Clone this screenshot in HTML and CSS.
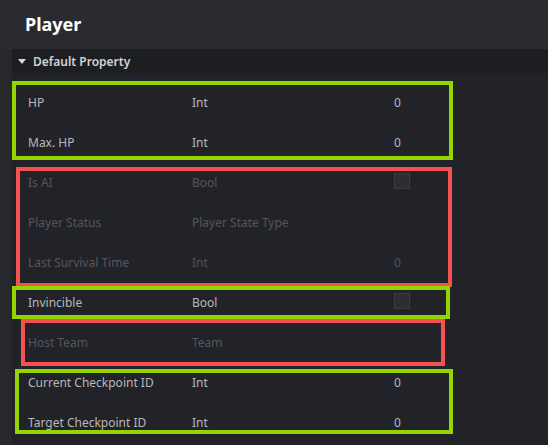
FILE: index.html
```html
<!DOCTYPE html>
<html>
<head>
<meta charset="utf-8">
<link rel="stylesheet" href="styles.css">
</head>
<body>
<div class="header"><h1 class="title">Player</h1></div>
<div class="panel">
  <div class="gutter"></div>
  <div class="section">
    <div class="section-head"><span class="caret"></span><span>Default Property</span></div>
    <div class="rows">
      <div class="row"><span class="name">HP</span><span class="type">Int</span><span class="val">0</span></div>
      <div class="row"><span class="name">Max. HP</span><span class="type">Int</span><span class="val">0</span></div>
      <div class="row off"><span class="name">Is AI</span><span class="type">Bool</span><span class="val"><span class="check"></span></span></div>
      <div class="row off"><span class="name">Player Status</span><span class="type">Player State Type</span><span class="val"></span></div>
      <div class="row off"><span class="name">Last Survival Time</span><span class="type">Int</span><span class="val">0</span></div>
      <div class="row"><span class="name">Invincible</span><span class="type">Bool</span><span class="val"><span class="check"></span></span></div>
      <div class="row off"><span class="name">Host Team</span><span class="type">Team</span><span class="val"></span></div>
      <div class="row"><span class="name">Current Checkpoint ID</span><span class="type">Int</span><span class="val">0</span></div>
      <div class="row"><span class="name">Target Checkpoint ID</span><span class="type">Int</span><span class="val">0</span></div>
    </div>
  </div>
</div>
<div class="mark green m1"></div>
<div class="mark red m2"></div>
<div class="mark green m3"></div>
<div class="mark red m4"></div>
<div class="mark green m5"></div>
</body>
</html>
```

FILE: styles.css
```css
html, body {
  margin: 0;
  padding: 0;
}
body {
  width: 548px;
  height: 445px;
  overflow: hidden;
  background: #222328;
  font-family: "Noto Sans", "Open Sans", sans-serif;
  font-size: 12px;
  position: relative;
}
.header {
  height: 49px;
  background: #2a2b30;
  display: flex;
  align-items: center;
  padding-left: 25px;
}
.title {
  margin: 0;
  color: #ffffff;
  font-size: 18px;
  font-weight: 700;
  line-height: 1;
  padding-bottom: 2px;
}
.panel {
  display: flex;
  height: 396px;
}
.gutter {
  width: 12px;
  background: #27282c;
}
.section {
  flex: 1;
  background: #222328;
}
.section-head {
  height: 24px;
  background: #1d1e22;
  display: flex;
  align-items: center;
  color: #d2d2d4;
  font-size: 12px;
  font-weight: 600;
  padding-left: 6px;
  gap: 7px;
}
.caret {
  width: 0;
  height: 0;
  border-left: 4px solid transparent;
  border-right: 4px solid transparent;
  border-top: 5px solid #d8d8d8;
}
.rows {
  padding-top: 9px;
}
.row {
  height: 40px;
  display: flex;
  align-items: center;
  color: #b8b8bc;
}
.row.off {
  color: #55565b;
}
.name {
  width: 164px;
  padding-left: 16px;
}
.type {
  width: 202px;
}
.val {
  display: flex;
  align-items: center;
}
.check {
  width: 14px;
  height: 14px;
  background: #2d2e33;
  border: 1px solid #3a3b40;
  margin-top: -2px;
}
.mark {
  position: absolute;
  box-sizing: border-box;
  border: 4px solid;
}
.green { border-color: #93d500; }
.red { border-color: #f4514f; }
.m1 { left: 12px; top: 81px; width: 441px; height: 79px; }
.m2 { left: 16px; top: 167px; width: 436px; height: 120px; }
.m3 { left: 12px; top: 286px; width: 438px; height: 33px; }
.m4 { left: 21px; top: 319px; width: 424px; height: 47px; }
.m5 { left: 15px; top: 369px; width: 438px; height: 65px; }
```
